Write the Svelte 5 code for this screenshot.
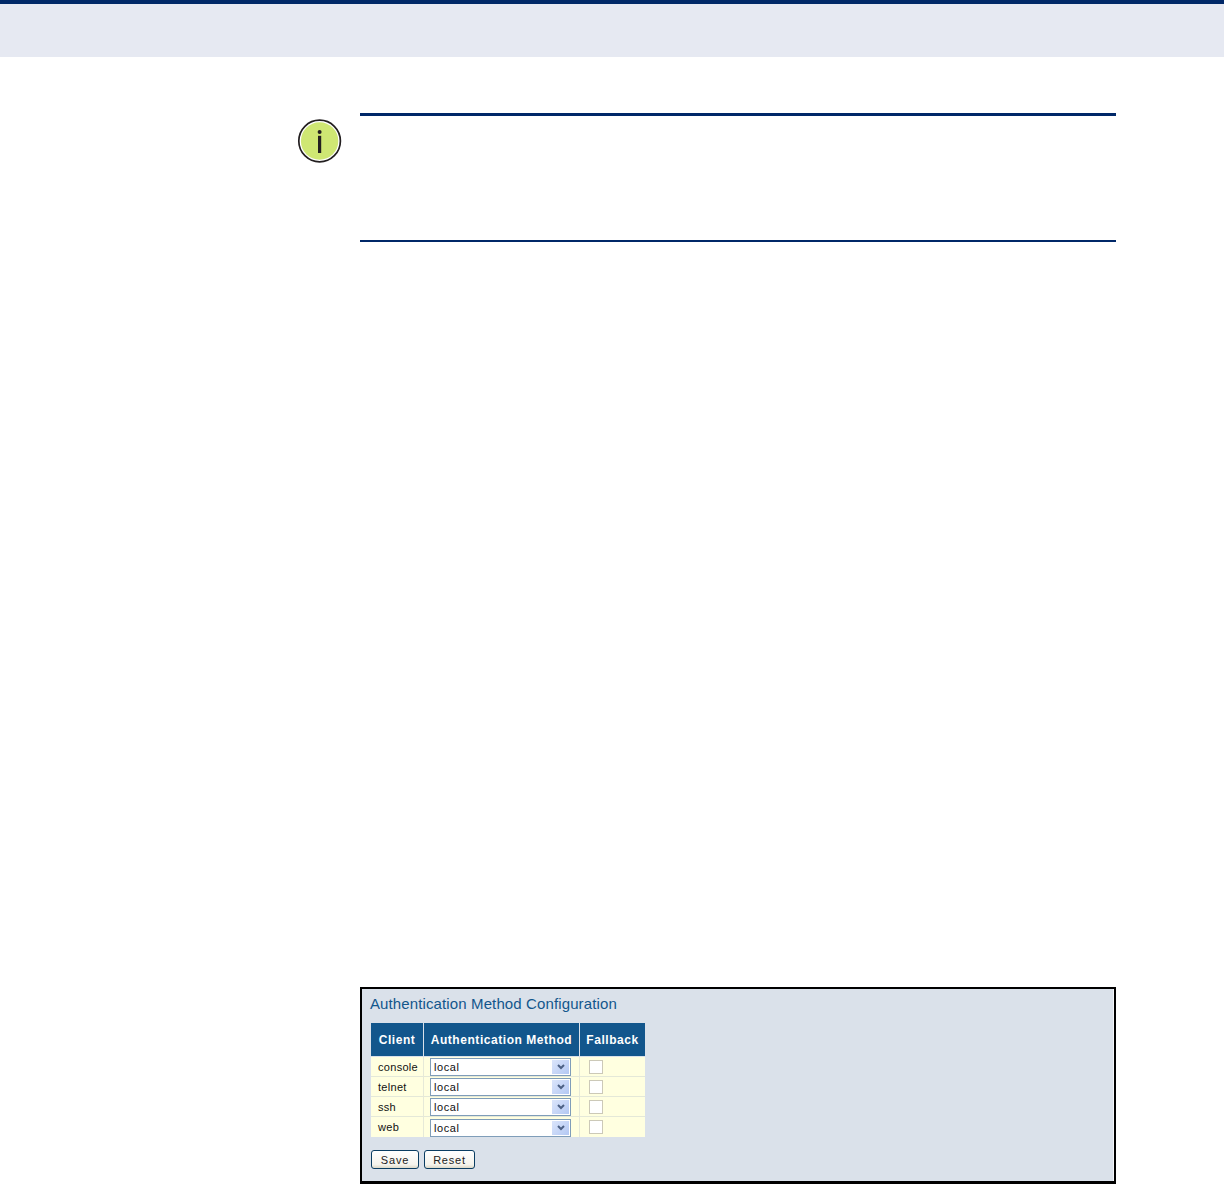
<script>
  const clients = ["console", "telnet", "ssh", "web"];
</script>

<div class="page">
  <header class="top-band"></header>

  <section class="note">
    <svg class="note-icon" width="46" height="46" viewBox="0 0 46 46" aria-hidden="true">
      <circle cx="23.6" cy="23" r="18.7" fill="#cfe773" />
      <circle cx="23.6" cy="23" r="20.8" fill="none" stroke="#231f20" stroke-width="1.7" />
      <circle cx="23.6" cy="14" r="2" fill="#231f20" />
      <rect x="22" y="17.8" width="3.2" height="17.2" fill="#231f20" />
    </svg>
    <div class="note-body"></div>
  </section>

  <section class="panel">
    <h2>Authentication Method Configuration</h2>
    <table>
      <thead>
        <tr>
          <th class="c1">Client</th>
          <th class="c2">Authentication Method</th>
          <th class="c3">Fallback</th>
        </tr>
      </thead>
      <tbody>
        {#each clients as client}
          <tr>
            <td class="name">{client}</td>
            <td>
              <div class="select-wrap">
                <select>
                  <option>local</option>
                </select>
                <span class="arrow">
                  <svg width="8" height="6" viewBox="0 0 8 6" aria-hidden="true">
                    <path d="M1 1 L4 4 L7 1" fill="none" stroke="#4d6185" stroke-width="2" />
                  </svg>
                </span>
              </div>
            </td>
            <td><input type="checkbox" /></td>
          </tr>
        {/each}
      </tbody>
    </table>
    <div class="buttons">
      <button class="save">Save</button>
      <button class="reset">Reset</button>
    </div>
  </section>
</div>

<style>
  :global(body) {
    background: #fff;
  }

  .page {
    height: 1184px;
    overflow: hidden;
    display: flex;
    flex-direction: column;
    font-family: "Liberation Sans", Arial, sans-serif;
  }

  .top-band {
    height: 53px;
    background: #e6e9f2;
    border-top: 4px solid #002868;
  }

  .note {
    display: flex;
    align-items: flex-start;
    margin: 56px 108px 0 296px;
    gap: 18px;
  }

  .note-icon {
    margin-top: 5px;
    flex: none;
  }

  .note-body {
    flex: 1;
    height: 124px;
    border-top: 3px solid #002868;
    border-bottom: 2px solid #002868;
  }

  .panel {
    margin: 745px 108px 0 360px;
    height: 197px;
    box-sizing: border-box;
    border: solid #000;
    border-width: 2px 2px 3px 2px;
    background: #dae1ea;
    box-shadow: inset -1px 0 0 #f4f6f9;
    padding: 7px 9px;
  }

  h2 {
    margin: 0 0 0 -1px;
    font-size: 15px;
    line-height: 15px;
    font-weight: 400;
    letter-spacing: 0.12px;
    color: #12568c;
  }

  table {
    border-collapse: separate;
    border-spacing: 0;
    margin-top: 12px;
    width: 274px;
    table-layout: fixed;
    font-size: 11px;
  }

  th {
    height: 33px;
    padding: 0;
    background: #12568c;
    color: #fff;
    font-size: 12px;
    font-weight: 700;
    letter-spacing: 0.55px;
    text-align: center;
    border-right: 1px solid #dae1ea;
    border-bottom: 1px solid #dae1ea;
  }

  th:last-child {
    border-right: 0;
  }

  .c1 {
    width: 52px;
  }

  .c2 {
    width: 155px;
  }

  td {
    height: 19px;
    padding: 0;
    background: #ffffe0;
    border-right: 1px solid #e6e9d8;
    border-bottom: 1px solid #e4e8d8;
    color: #111;
  }

  td:last-child {
    border-right: 0;
    padding-left: 9px;
  }

  tr:last-child td {
    border-bottom: 0;
    height: 20px;
  }

  .name {
    padding-left: 7px;
    letter-spacing: 0.3px;
  }

  .select-wrap {
    position: relative;
    width: 141px;
    height: 18px;
    margin: 1px 0 0 6px;
  }

  select {
    appearance: none;
    display: block;
    width: 100%;
    height: 100%;
    box-sizing: border-box;
    border: 1px solid #7f9db9;
    border-radius: 0;
    background: #fff;
    padding: 0 0 0 3px;
    font-family: inherit;
    font-size: 11px;
    letter-spacing: 0.55px;
    color: #111;
  }

  .arrow {
    position: absolute;
    right: 2px;
    top: 2px;
    width: 17px;
    height: 14px;
    display: flex;
    align-items: center;
    justify-content: center;
    background: linear-gradient(135deg, #dbe5fb, #b3c8f3);
    pointer-events: none;
  }

  input[type="checkbox"] {
    appearance: none;
    display: block;
    margin: 0;
    width: 14px;
    height: 14px;
    box-sizing: border-box;
    background: #fff;
    border: 1px solid #ccc9b8;
  }

  .buttons {
    display: flex;
    gap: 5px;
    margin-top: 13px;
  }

  button {
    height: 19px;
    padding: 1px 0 0;
    box-sizing: border-box;
    border: 1px solid #0a3d62;
    border-radius: 3px;
    background: linear-gradient(#fff, #f4f3ec 80%, #dcd8c8);
    font-family: inherit;
    font-size: 11px;
    letter-spacing: 0.8px;
    color: #222;
  }

  .save {
    width: 48px;
  }

  .reset {
    width: 51px;
  }
</style>
